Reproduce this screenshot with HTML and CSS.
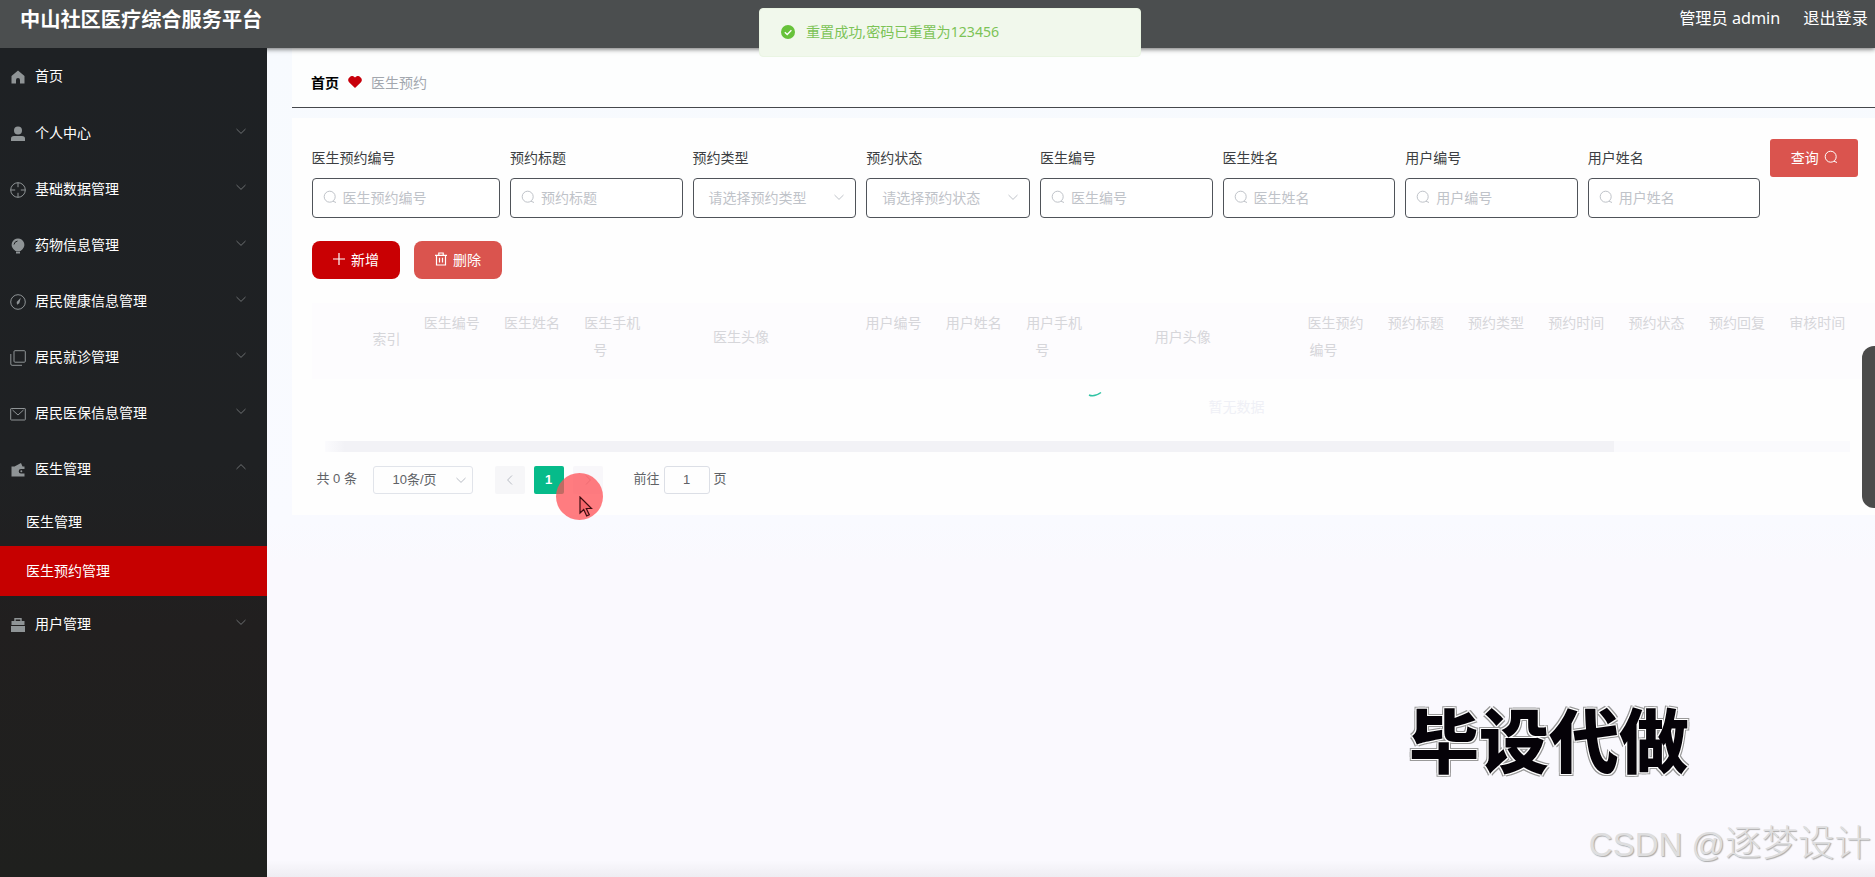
FILE: index.html
```html
<!DOCTYPE html>
<html lang="zh-CN">
<head>
  <meta charset="UTF-8">
  <title>中山社区医疗综合服务平台</title>
  <link rel="stylesheet" href="styles.css">
</head>
<body>
  <svg width="0" height="0" class="defs">
    <symbol id="i-down" viewBox="0 0 12 12"><path d="M1.5 4l4.5 4.4L10.500 4" fill="none" stroke="currentColor"/></symbol>
    <symbol id="i-search" viewBox="0 0 14 14"><circle cx="6.700" cy="6.700" r="5.500" fill="none" stroke="currentColor"/><path d="M10 11.200l3 1.300" fill="none" stroke="currentColor"/></symbol>
  </svg>
  <div class="header">
    <div class="title">中山社区医疗综合服务平台</div>
    <div class="user"><span>管理员 admin</span><span>退出登录</span></div>
  </div>
  <div class="container">
    <div class="sidebar">
      <ul>
        <li class="home"><svg class="icon" viewBox="0 0 16 16"><path d="M8 1.500L1.500 7v7.500H6V11a2 2 0 0 1 4 0v3.500h4.500V7z" fill="currentColor"/></svg>首页</li>
        <li><svg class="icon" viewBox="0 0 16 16"><circle cx="8" cy="4.500" r="4" fill="currentColor"/><path d="M1 15v-2.500Q1 10 4 10h8q3 0 3 2.500V15z" fill="currentColor"/></svg>个人中心<svg class="arrow"><use href="#i-down"/></svg></li>
        <li><svg class="icon" viewBox="0 0 16 16"><g fill="none" stroke="currentColor"><circle cx="8" cy="8" r="7.300"/><path d="M8 .7v4.500M8 10.800v4.500M.7 8h4.500M10.800 8h4.500"/></g></svg>基础数据管理<svg class="arrow"><use href="#i-down"/></svg></li>
        <li><svg class="icon" viewBox="0 0 16 16"><path d="M8 .5a6.300 6.300 0 0 1 4.500 10.700L10.500 13h-5l-2-1.800A6.300 6.300 0 0 1 8 .5z" fill="currentColor"/><path d="M6 14.500h4" stroke="currentColor" stroke-width="2"/><path d="M4 6.500Q4.500 3.500 7.500 3" fill="none" stroke="#1f2123"/></svg>药物信息管理<svg class="arrow"><use href="#i-down"/></svg></li>
        <li><svg class="icon" viewBox="0 0 16 16"><circle cx="8" cy="8" r="7.300" fill="none" stroke="currentColor"/><path d="M10.800 3.700L9.300 9.200 7 10.800 6.700 8z" fill="currentColor"/></svg>居民健康信息管理<svg class="arrow"><use href="#i-down"/></svg></li>
        <li><svg class="icon" viewBox="0 0 16 16"><g fill="none" stroke="currentColor"><rect x="4" y=".7" width="11.300" height="11.500" rx="1"/><path d="M.8 4v10q0 1.300 1.300 1.300H12"/></g></svg>居民就诊管理<svg class="arrow"><use href="#i-down"/></svg></li>
        <li><svg class="icon" viewBox="0 0 16 16"><g fill="none" stroke="currentColor"><rect x=".7" y="2.500" width="14.600" height="11.500" rx=".5"/><path d="M2.500 4L8 9l5.500-5"/></g></svg>居民医保信息管理<svg class="arrow"><use href="#i-down"/></svg></li>
        <li><svg class="icon" viewBox="0 0 16 16"><path d="M1.500 4.500h3L11 1l1.500 3.500h2V7H11a2.300 2.300 0 0 0 0 4.600h3.500v2.900h-13z" fill="currentColor"/><circle cx="11.300" cy="9.300" r="1" fill="currentColor"/></svg>医生管理<svg class="arrow up"><use href="#i-down"/></svg></li>
      </ul>
      <ul class="submenu">
        <li>医生管理</li>
        <li class="active">医生预约管理</li>
      </ul>
      <ul>
        <li><svg class="icon" viewBox="0 0 16 16"><path d="M5 4V1.700h6V4" fill="none" stroke="currentColor" stroke-width="1.400"/><path d="M1.500 4h13v4h-13zM1 9h14v6H1z" fill="currentColor"/></svg>用户管理<svg class="arrow"><use href="#i-down"/></svg></li>
      </ul>
    </div>
    <div class="main">
      <div class="breadcrumb">
        <b>首页</b>
        <svg class="heart" viewBox="0 0 14 12"><path d="M7 12L1.300 6.500A3.700 3.700 0 0 1 7 1.500a3.700 3.700 0 0 1 5.700 5z" fill="#c8000b"/></svg>
        <span>医生预约</span>
      </div>
      <div class="card">
        <div class="search-form">
          <div class="field wide">
            <label>医生预约编号</label>
            <div class="input"><svg><use href="#i-search"/></svg>医生预约编号</div>
          </div>
          <div class="field">
            <label>预约标题</label>
            <div class="input"><svg><use href="#i-search"/></svg>预约标题</div>
          </div>
          <div class="field narrow">
            <label>预约类型</label>
            <div class="input select">请选择预约类型<svg><use href="#i-down"/></svg></div>
          </div>
          <div class="field narrow">
            <label>预约状态</label>
            <div class="input select">请选择预约状态<svg><use href="#i-down"/></svg></div>
          </div>
          <div class="field">
            <label>医生编号</label>
            <div class="input"><svg><use href="#i-search"/></svg>医生编号</div>
          </div>
          <div class="field">
            <label>医生姓名</label>
            <div class="input"><svg><use href="#i-search"/></svg>医生姓名</div>
          </div>
          <div class="field">
            <label>用户编号</label>
            <div class="input"><svg><use href="#i-search"/></svg>用户编号</div>
          </div>
          <div class="field">
            <label>用户姓名</label>
            <div class="input"><svg><use href="#i-search"/></svg>用户姓名</div>
          </div>
          <div class="btn query">查询<svg><use href="#i-search"/></svg></div>
        </div>
        <div class="actions">
          <div class="btn add"><svg viewBox="0 0 14 14"><path d="M7 1v12M1 7h12" stroke="currentColor" stroke-width="1.200"/></svg>新增</div>
          <div class="btn"><svg viewBox="0 0 14 14"><path d="M1 3.300h12M4.800 3V1h4.400v2M2.500 3.500V13h9V3.500M5.500 5.800v4.700M8.500 5.800v4.700" fill="none" stroke="currentColor" stroke-width="1.200"/></svg>删除</div>
        </div>
        <div class="table">
          <div class="thead">
            <div class="th"></div>
            <div class="th index">索引</div>
            <div class="th">医生编号<i class="caret"></i></div>
            <div class="th">医生姓名<i class="caret"></i></div>
            <div class="th">医生手机号<i class="caret"></i></div>
            <div class="th photo">医生头像<i class="caret"></i></div>
            <div class="th">用户编号<i class="caret"></i></div>
            <div class="th">用户姓名<i class="caret"></i></div>
            <div class="th">用户手机号<i class="caret"></i></div>
            <div class="th photo">用户头像<i class="caret"></i></div>
            <div class="th">医生预约编号<i class="caret"></i></div>
            <div class="th">预约标题<i class="caret"></i></div>
            <div class="th">预约类型<i class="caret"></i></div>
            <div class="th">预约时间<i class="caret"></i></div>
            <div class="th">预约状态<i class="caret"></i></div>
            <div class="th">预约回复<i class="caret"></i></div>
            <div class="th">审核时间<i class="caret"></i></div>
          </div>
          <div class="empty">暂无数据</div>
          <div class="scrollbar"><div class="thumb"></div></div>
          <svg class="loading" viewBox="0 0 14 8"><path d="M1 5Q6 7.500 13 2.500" fill="none" stroke="#2fc3a3" stroke-width="1.500"/></svg>
        </div>
        <div class="pagination">
          <span class="total">共 0 条</span>
          <div class="size">10条/页<svg><use href="#i-down"/></svg></div>
          <div class="page prev"><svg><use href="#i-down"/></svg></div>
          <div class="page current">1</div>
          <div class="page next"><svg><use href="#i-down"/></svg></div>
          <span>前往</span>
          <div class="jump">1</div>
          <span>页</span>
        </div>
      </div>
    </div>
  </div>

  <div class="message">
    <svg viewBox="0 0 14 14"><circle cx="7" cy="7" r="7" fill="#67c23a"/><path d="M3.800 7.200L6.200 9.500l4.200-4.300" fill="none" stroke="#fff" stroke-width="1.300"/></svg>
    重置成功,密码已重置为123456
  </div>
  <div class="side-tab"></div>
  <div class="pointer">
    <svg viewBox="0 0 14 22"><path d="M1 1v16l3.700-3.500 3 6.500 2.600-1.200-3-6.300h5.200z" fill="#f4666b" stroke="#3d0d10" stroke-width="1.200"/></svg>
  </div>
  <div class="ad">毕设代做</div>
  <div class="watermark"><span>CSDN @</span>逐梦设计</div>
</body>
</html>
```

FILE: styles.css
```css
* {
  box-sizing: border-box;
}
body {
  margin: 0;
  height: 877px;
  overflow: hidden;
  position: relative;
  font-family: "Noto Sans", "Noto Sans CJK SC", sans-serif;
  font-size: 14px;
  background: #faf9fe;
}
.defs {
  position: absolute;
}
ul {
  list-style: none;
  margin: 0;
  padding: 0;
}
.header {
  height: 48px;
  background: #4b4e4f;
  color: #fff;
  display: flex;
  justify-content: space-between;
  padding: 0 7px 0 20px;
  line-height: 39px;
  position: relative;
  z-index: 1;
  box-shadow: 0 1px 5px rgba(0,0,0,0.6);
}
.header .title {
  font-size: 20.200px;
  font-weight: bold;
}
.header .user {
  font-size: 16.200px;
  display: flex;
  gap: 23px;
  line-height: 37px;
}
.container {
  display: flex;
  height: 829px;
}
.sidebar {
  width: 267px;
  background: linear-gradient(#1e2124, #1f2123 50%, #211f1f 70%, #1f201e);
  color: #fff;
  padding-top: 1px;
  flex: none;
  z-index: 2;
}
.sidebar li {
  height: 56px;
  display: flex;
  align-items: center;
  padding: 0 20px 2px 10px;
}
.sidebar li.home {
  padding-bottom: 4px;
}
.sidebar .icon {
  width: 16px;
  height: 16px;
  margin-right: 9px;
  margin-top: 3px;
  color: #8f9496;
}
.sidebar .arrow {
  width: 12px;
  height: 12px;
  margin-left: auto;
  margin-top: -3px;
  color: #6d7072;
}
.arrow.up {
  transform: rotate(180deg);
}
.sidebar .submenu li {
  height: 50px;
  padding-left: 26px;
}
.submenu li:first-child {
  margin-bottom: -1px;
}
.submenu .active {
  background: #c60000;
}
.main {
  flex: 1;
  min-width: 0;
  padding: 0 0 0 25px;
  background: linear-gradient(#f7fafe, #f9faff 57%, #faf9fe 62%, #faf9fe 98%, #eeedf2);
}
.breadcrumb {
  height: 60px;
  background: #fdfefe;
  border-bottom: 1px solid #45484c;
  display: flex;
  align-items: center;
  padding: 9px 20px 0 19px;
}
.breadcrumb span {
  color: #a2a7ae;
}
.heart {
  width: 14px;
  height: 12px;
  margin: 0 9px;
}
.card {
  background: #fefefe;
  margin-top: 10px;
  height: 397px;
  padding: 21px 0 0 19.500px;
}
.search-form {
  display: flex;
  gap: 10px;
}
.field {
  width: 172.600px;
}
.field.wide {
  width: 188.500px;
}
.field.narrow {
  width: 163.700px;
}
.field label {
  display: block;
  height: 39px;
  line-height: 38px;
  color: #3c3e42;
}
.input {
  height: 40px;
  border: 1px solid #4f5359;
  border-radius: 4px;
  background: #fff;
  color: #bfc3c9;
  display: flex;
  align-items: center;
  padding: 0 10px 2px;
}
.input svg {
  width: 14px;
  height: 14px;
  margin-right: 6px;
}
.input.select {
  padding-left: 15px;
  justify-content: space-between;
}
.input.select svg {
  width: 12px;
  height: 12px;
  margin: 0;
}
.btn {
  width: 88px;
  height: 38px;
  background: #da544e;
  color: #fff;
  border-radius: 8px;
  display: flex;
  align-items: center;
  justify-content: center;
  gap: 5px;
  padding-bottom: 2px;
}
.btn svg {
  width: 14px;
  height: 14px;
}
.btn.query {
  border-radius: 3px;
}
.btn.add {
  background: #c90003;
}
.actions {
  display: flex;
  gap: 14px;
  margin-top: 23px;
}
.table {
  margin-top: 24px;
  position: relative;
}
.thead {
  display: flex;
  align-items: center;
  height: 76px;
  padding-bottom: 11px;
  background: #fdfcfe;
  color: #d6d6da;
  line-height: 27px;
}
.th {
  width: 80.300px;
  padding: 0 10px;
  text-align: center;
  flex: none;
}
.th:first-child, .th.index {
  width: 50px;
}
.th.index {
  position: relative;
  top: 3px;
}
.th.photo {
  width: 201px;
  padding-top: 2px;
}
.caret {
  display: inline-block;
  width: 24px;
  height: 10px;
}
.empty {
  height: 62px;
  line-height: 56px;
  color: #eff0f6;
  padding-left: 897px;
}
.scrollbar {
  height: 11px;
  margin: 0 25px 0 13px;
  background: #fafafd;
}
.thumb {
  width: 1289px;
  height: 11px;
  background: linear-gradient(90deg, #fbfbfd, #f2f2f6 20px);
}
.loading {
  position: absolute;
  left: 776px;
  top: 87px;
  width: 14px;
  height: 8px;
}
.pagination {
  display: flex;
  align-items: center;
  margin-top: 14px;
  padding-left: 5px;
  font-family: "Liberation Sans", "Noto Sans CJK SC", sans-serif;
  font-size: 13px;
  line-height: 26px;
  color: #606266;
}
.pagination span {
  padding-bottom: 2px;
}
.pagination .total {
  width: 56px;
}
.size {
  width: 100px;
  height: 28px;
  border: 1px solid #e1e4ea;
  border-radius: 3px;
  display: flex;
  align-items: center;
  justify-content: space-between;
  padding: 0 5px 1px 19px;
}
.pagination svg {
  width: 12px;
  height: 12px;
  color: #b8bcc4;
}
.page {
  width: 30px;
  height: 28px;
  background: #f6f6f8;
  border-radius: 2px;
  display: flex;
  align-items: center;
  justify-content: center;
}
.page.prev {
  margin: 0 9px 0 22px;
}
.page.prev svg {
  transform: rotate(90deg);
}
.page.next svg {
  transform: rotate(-90deg);
}
.page.current {
  background: #06bb8a;
  color: #fff;
  font-weight: bold;
}
.page.next {
  background: #f8f7fa;
  margin: 0 31px 0 9px;
}
.jump {
  width: 46px;
  height: 28px;
  border: 1px solid #dcdfe6;
  border-radius: 3px;
  text-align: center;
  margin: 0 4px;
}
.message {
  position: absolute;
  z-index: 3;
  left: 759px;
  top: 8px;
  width: 382px;
  height: 49px;
  background: #f1f8ec;
  border: 1px solid #eaf5e3;
  border-radius: 4px;
  color: #7cc356;
  font-size: 14.100px;
  display: flex;
  align-items: center;
  padding: 0 21px 3px;
}
.message svg {
  width: 14px;
  height: 14px;
  margin: 2px 11px 0 0;
}
.side-tab {
  position: absolute;
  right: 0;
  top: 346px;
  width: 13px;
  height: 162px;
  background: #4b4b4b;
  border-radius: 12px 0 0 12px;
}
.pointer {
  position: absolute;
  left: 556px;
  top: 473px;
  width: 47px;
  height: 47px;
  border-radius: 50%;
  background: rgba(255,80,85,0.75);
}
.pointer svg {
  position: absolute;
  left: 23px;
  top: 23px;
  width: 14px;
  height: 22px;
}
.ad {
  position: absolute;
  left: 1409px;
  top: 691px;
  font-size: 70px;
  line-height: 100px;
  font-weight: 900;
  color: #050208;
  text-shadow: 1px 1px 0 #fff, -1px -1px 0 #fff, 1px -1px 0 #fff, -1px 1px 0 #fff, 2px 2px 0 #999, -2px -2px 0 #999, 2px -2px 0 #999, -2px 2px 0 #999;
}
.watermark {
  position: absolute;
  right: 4px;
  top: 818px;
  font-family: "Liberation Sans", "Noto Sans CJK SC", sans-serif;
  font-size: 36.500px;
  line-height: 52px;
  color: #dededf;
  font-weight: 300;
  text-shadow: 1px 1px 1px #aaa;
}
.watermark span {
  font-size: 33px;
}
```
